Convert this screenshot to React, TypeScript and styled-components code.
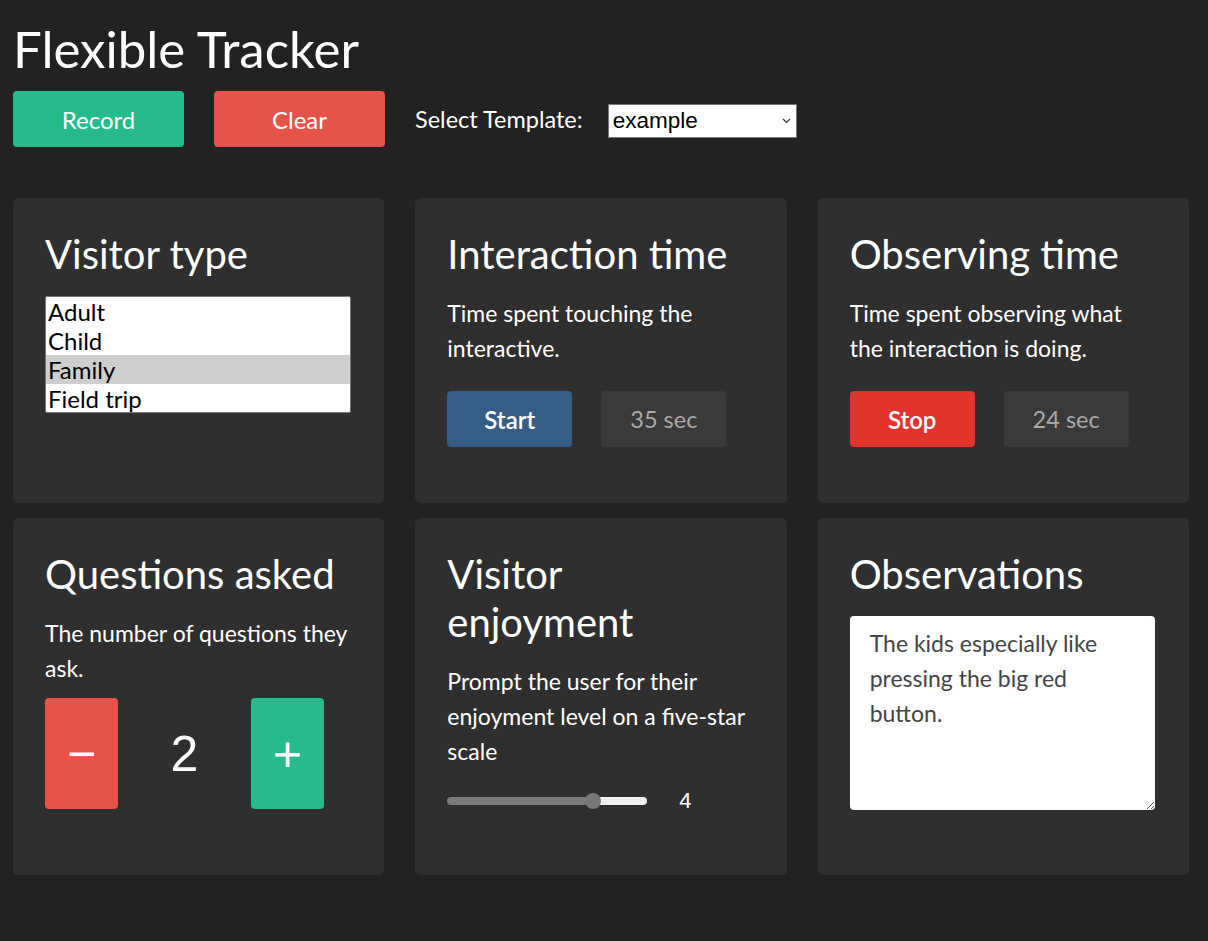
import { useState } from "react";
import styled, { createGlobalStyle } from "styled-components";

const GlobalStyle = createGlobalStyle`
  html, body {
    margin: 0;
    background: #222222;
  }
  body {
    font-family: Lato, "Noto Sans", sans-serif;
    color: #ffffff;
  }
`;

const Page = styled.div`
  padding: 0 19px 40px 13px;
`;

const Title = styled.h1`
  margin: 18px 0 12px;
  font-size: 51px;
  font-weight: 400;
  line-height: 1.2;
`;

const Toolbar = styled.div`
  display: flex;
  align-items: center;
  gap: 30px;
`;

const ToolbarButton = styled.button<{ $bg: string }>`
  width: 171px;
  height: 56px;
  border: none;
  border-radius: 4px;
  background: ${(p) => p.$bg};
  color: #fff;
  font-family: Lato, sans-serif;
  font-size: 24px;
  cursor: pointer;
`;

const Label = styled.label`
  font-size: 23.5px;
  margin-right: -5px;
`;

const SelectWrap = styled.div`
  position: relative;
  width: 189px;
  height: 34px;
  margin-top: 3px;
`;

const TemplateSelect = styled.select`
  appearance: none;
  width: 100%;
  height: 100%;
  box-sizing: border-box;
  border: 1px solid #767676;
  border-radius: 0;
  background: #fff;
  color: #000;
  font-family: "Liberation Sans", Arial, sans-serif;
  font-size: 22.5px;
  padding: 0 4px;
`;

const Chevron = styled.svg`
  position: absolute;
  right: 6px;
  top: 14px;
  pointer-events: none;
`;

const Grid = styled.div`
  margin-top: 51px;
  display: grid;
  grid-template-columns: repeat(3, 1fr);
  gap: 15px 31px;
`;

const Card = styled.section`
  background: #2f2f2f;
  border-radius: 5px;
  padding: 32px 32px 56px;
`;

const Heading = styled.h2`
  margin: 0 0 18px;
  font-size: 40px;
  font-weight: 400;
  line-height: 1.2;
`;

const Description = styled.p<{ $gap: number }>`
  margin: 0 0 ${(p) => p.$gap}px;
  font-size: 23px;
  line-height: 35px;
`;

const ListBox = styled.select`
  display: block;
  width: 306px;
  height: 117px;
  box-sizing: border-box;
  border: 1px solid #767676;
  background: #fff;
  color: #000;
  font-family: Lato, sans-serif;
  font-size: 24px;
  padding: 0;
  overflow: hidden;
  outline: none;

  option {
    padding: 0 2px;
    line-height: 28.75px;
    height: 28.75px;
    color: #000;
  }
  option:checked {
    background: linear-gradient(#cecece, #cecece);
    color: #000;
  }
`;

const ButtonRow = styled.div`
  display: flex;
  gap: 29px;
`;

const ActionButton = styled.button<{ $bg: string }>`
  width: 125px;
  height: 56px;
  border: none;
  border-radius: 4px;
  background: ${(p) => p.$bg};
  color: #fff;
  font-family: Lato, sans-serif;
  font-size: 24px;
  font-weight: 600;
  cursor: pointer;
`;

const TimerBox = styled.div`
  width: 125px;
  height: 56px;
  border-radius: 4px;
  background: #3a3a3a;
  color: #a9a9a9;
  font-size: 23.5px;
  display: flex;
  align-items: center;
  justify-content: center;
`;

const Counter = styled.div`
  display: flex;
  align-items: center;
  gap: 30px;
`;

const CounterButton = styled.button<{ $bg: string }>`
  width: 73px;
  height: 111px;
  border: none;
  border-radius: 4px;
  background: ${(p) => p.$bg};
  color: #fff;
  font-family: "Liberation Sans", Arial, sans-serif;
  font-size: 50px;
  padding: 0;
  cursor: pointer;
`;

const CountValue = styled.div`
  width: 73px;
  text-align: center;
  font-family: "Liberation Sans", Arial, sans-serif;
  font-size: 50px;
`;

const SliderRow = styled.div`
  display: flex;
  align-items: center;
  height: 36px;
  gap: 32px;
`;

const Range = styled.input`
  -webkit-appearance: none;
  appearance: none;
  width: 200px;
  height: 8px;
  margin: 0;
  border-radius: 4px;
  background: linear-gradient(
    to right,
    #7a7a7a var(--fill),
    #efefef var(--fill)
  );
  outline: none;

  &::-webkit-slider-thumb {
    -webkit-appearance: none;
    width: 16px;
    height: 16px;
    border-radius: 50%;
    background: #777777;
    border: none;
  }
`;

const RangeValue = styled.span`
  font-family: "Liberation Sans", Arial, sans-serif;
  font-size: 22px;
`;

const Notes = styled.textarea`
  display: block;
  width: 305px;
  height: 194px;
  box-sizing: border-box;
  border: none;
  border-radius: 4px;
  background: #fff;
  color: #444;
  font-family: Lato, sans-serif;
  font-size: 23px;
  line-height: 35px;
  padding: 10px 20px;
  outline: none;
`;

export default function App() {
  const [visitor, setVisitor] = useState("Family");
  const [questions, setQuestions] = useState(2);
  const [enjoyment, setEnjoyment] = useState(4);
  const [notes, setNotes] = useState(
    "The kids especially like pressing the big red button."
  );

  const fill = `${8 + ((enjoyment - 1) / 4) * 184}px`;

  return (
    <Page>
      <GlobalStyle />
      <Title>Flexible Tracker</Title>
      <Toolbar>
        <ToolbarButton $bg="#26bb8c">Record</ToolbarButton>
        <ToolbarButton $bg="#e5534a">Clear</ToolbarButton>
        <Label htmlFor="template">Select Template:</Label>
        <SelectWrap>
          <TemplateSelect id="template" defaultValue="example">
            <option value="example">example</option>
          </TemplateSelect>
          <Chevron width="9" height="6" viewBox="0 0 9 6">
            <path d="M1 1l3.5 3.5L8 1" fill="none" stroke="#333" strokeWidth="1.2" />
          </Chevron>
        </SelectWrap>
      </Toolbar>

      <Grid>
        <Card>
          <Heading>Visitor type</Heading>
          <ListBox
            size={4}
            value={visitor}
            onChange={(e) => setVisitor(e.target.value)}
          >
            <option>Adult</option>
            <option>Child</option>
            <option>Family</option>
            <option>Field trip</option>
          </ListBox>
        </Card>

        <Card>
          <Heading>Interaction time</Heading>
          <Description $gap={25}>Time spent touching the interactive.</Description>
          <ButtonRow>
            <ActionButton $bg="#365d85">Start</ActionButton>
            <TimerBox>35 sec</TimerBox>
          </ButtonRow>
        </Card>

        <Card>
          <Heading>Observing time</Heading>
          <Description $gap={25}>
            Time spent observing what the interaction is doing.
          </Description>
          <ButtonRow>
            <ActionButton $bg="#e0342c">Stop</ActionButton>
            <TimerBox>24 sec</TimerBox>
          </ButtonRow>
        </Card>

        <Card>
          <Heading>Questions asked</Heading>
          <Description $gap={12}>The number of questions they ask.</Description>
          <Counter>
            <CounterButton
              $bg="#e5534a"
              onClick={() => setQuestions((q) => Math.max(0, q - 1))}
            >
              −
            </CounterButton>
            <CountValue>{questions}</CountValue>
            <CounterButton $bg="#26bb8c" onClick={() => setQuestions((q) => q + 1)}>
              +
            </CounterButton>
          </Counter>
        </Card>

        <Card>
          <Heading>Visitor enjoyment</Heading>
          <Description $gap={14}>
            Prompt the user for their enjoyment level on a five-star scale
          </Description>
          <SliderRow>
            <Range
              type="range"
              min={1}
              max={5}
              value={enjoyment}
              onChange={(e) => setEnjoyment(Number(e.target.value))}
              style={{ ["--fill" as string]: fill }}
            />
            <RangeValue>{enjoyment}</RangeValue>
          </SliderRow>
        </Card>

        <Card>
          <Heading>Observations</Heading>
          <Notes value={notes} onChange={(e) => setNotes(e.target.value)} />
        </Card>
      </Grid>
    </Page>
  );
}
